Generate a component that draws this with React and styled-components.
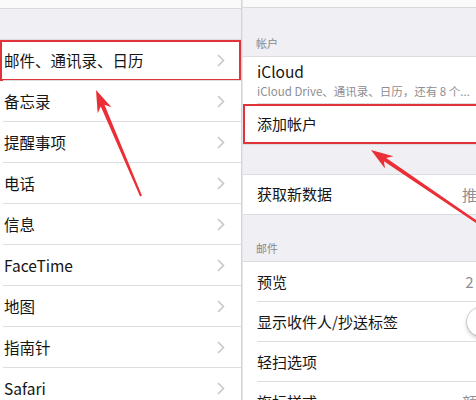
import React from 'react';
import styled, { createGlobalStyle } from 'styled-components';

const GlobalStyle = createGlobalStyle`
  html, body {
    margin: 0;
    padding: 0;
    background: #efeff4;
  }
  body {
    font-family: "Noto Sans CJK SC", "Noto Sans", "Liberation Sans", sans-serif;
    color: #111;
  }
`;

const leftItems = [
  { label: '邮件、通讯录、日历', highlighted: true },
  { label: '备忘录' },
  { label: '提醒事项' },
  { label: '电话' },
  { label: '信息' },
  { label: 'FaceTime' },
  { label: '地图' },
  { label: '指南针' },
  { label: 'Safari' },
];

const mailItems = [
  { label: '预览', value: '2 行' },
  { label: '显示收件人/抄送标签', toggle: true },
  { label: '轻扫选项', value: '' },
  { label: '旗标样式', value: '颜色' },
];

// arrow polygon from the tip back to the tail, tapering shaft
const arrowPoints = (tip, tail) => {
  const dx = tail[0] - tip[0];
  const dy = tail[1] - tip[1];
  const len = Math.hypot(dx, dy);
  const ux = dx / len;
  const uy = dy / len;
  const px = -uy;
  const py = ux;
  const headLen = 22;
  const headW = 7.5;
  const notch = 17;
  const shaftW = 2;
  const tailW = 1;
  const at = (d, w) => [tip[0] + ux * d + px * w, tip[1] + uy * d + py * w];
  return [
    tip,
    at(headLen, headW),
    at(notch, shaftW),
    at(len, tailW),
    at(len, -tailW),
    at(notch, -shaftW),
    at(headLen, -headW),
  ]
    .map(p => p.join(','))
    .join(' ');
};

const Chevron = () => (
  <ChevronIcon viewBox="0 0 8 13" width="8" height="13">
    <polyline points="1,1 6.5,6.5 1,12" fill="none" stroke="#c7c7cc" strokeWidth="1.6" />
  </ChevronIcon>
);

const App = () => (
  <Page>
    <GlobalStyle />
    <LeftPanel>
      <TopStrip $height={9} />
      <Gap $height={30} />
      <Group>
        {leftItems.map(item => (
          <Row key={item.label} $inset={3} $highlighted={item.highlighted}>
            <RowInner $pad={1} $height={40}>
              <Label $size={15.5}>{item.label}</Label>
              <Chevron />
            </RowInner>
          </Row>
        ))}
      </Group>
    </LeftPanel>

    <RightPanel>
      <RightInner>
        <TopStrip $height={8} />
        <SectionHeader $height={48}>帐户</SectionHeader>
        <Group>
          <Row $inset={14}>
            <RowInner $height={46}>
              <Stack>
                <Label $size={15.5}>iCloud</Label>
                <SubLabel>iCloud Drive、通讯录、日历，还有 8 个...</SubLabel>
              </Stack>
              <Chevron />
            </RowInner>
          </Row>
          <Row $inset={2} $highlighted>
            <RowInner $pad={12} $height={39} $last>
              <Label>添加帐户</Label>
              <Chevron />
            </RowInner>
          </Row>
        </Group>

        <Gap $height={29} />
        <Group>
          <Row $inset={14}>
            <RowInner $height={38} $last>
              <Label>获取新数据</Label>
              <Value>推送</Value>
              <Chevron />
            </RowInner>
          </Row>
        </Group>

        <SectionHeader $height={46}>邮件</SectionHeader>
        <Group>
          {mailItems.map(item => (
            <Row key={item.label} $inset={14}>
              <RowInner $height={39}>
                <Label>{item.label}</Label>
                {item.toggle ? (
                  <Toggle>
                    <Knob />
                  </Toggle>
                ) : (
                  <>
                    <Value>{item.value}</Value>
                    <Chevron />
                  </>
                )}
              </RowInner>
            </Row>
          ))}
        </Group>
      </RightInner>
    </RightPanel>

    <Marks viewBox="0 0 476 400" width="476" height="400">
      <polygon points={arrowPoints([96, 90], [141, 196])} fill="#ea2f36" />
      <polygon points={arrowPoints([371, 150], [512, 246])} fill="#ea2f36" />
    </Marks>
  </Page>
);

const Page = styled.div`
  position: relative;
  display: flex;
  width: 476px;
  height: 400px;
  overflow: hidden;
  background: #efeff4;
`;

const LeftPanel = styled.div`
  width: 241px;
  flex: none;
  border-right: 1px solid #d4d4d8;
  display: flex;
  flex-direction: column;
`;

const RightPanel = styled.div`
  flex: 1;
  overflow: hidden;
  border-left: 1px solid #e6e6ea;
`;

const RightInner = styled.div`
  width: 281px;
  display: flex;
  flex-direction: column;
`;

const TopStrip = styled.div`
  height: ${props => props.$height - 1}px;
  background: #fafafa;
  border-bottom: 1px solid #d9d9dd;
  flex: none;
`;

const Gap = styled.div`
  height: ${props => props.$height}px;
  flex: none;
`;

const SectionHeader = styled.div`
  height: ${props => props.$height}px;
  box-sizing: border-box;
  display: flex;
  align-items: flex-end;
  padding: 0 0 5px 13px;
  font-size: 11px;
  color: #8a8a8f;
  flex: none;
`;

const Group = styled.div`
  background: #fff;
  border-top: 1px solid #dcdce0;
  border-bottom: 1px solid #dcdce0;
  display: flex;
  flex-direction: column;
`;

const Row = styled.div`
  padding-left: ${props => props.$inset}px;
  box-shadow: ${props => (props.$highlighted ? 'inset 0 0 0 2px #e2333b' : 'none')};
`;

const RowInner = styled.div`
  height: ${props => props.$height}px;
  display: flex;
  align-items: center;
  gap: 8px;
  padding: 0 16px 0 ${props => props.$pad || 0}px;
  border-bottom: 1px solid ${props => (props.$last ? 'transparent' : '#dedee2')};
  ${Row}:last-child & {
    border-bottom-color: transparent;
  }
`;

const Stack = styled.div`
  flex: 1;
  display: flex;
  flex-direction: column;
  gap: 1px;
  min-width: 0;
`;

const Label = styled.span`
  flex: 1;
  font-size: ${props => props.$size || 15}px;
  color: #151515;
  white-space: nowrap;
  line-height: 1.3;
`;

const SubLabel = styled.span`
  font-size: 11.5px;
  color: #8e8e93;
  white-space: nowrap;
`;

const Value = styled.span`
  font-size: 15px;
  color: #8e8e93;
  white-space: nowrap;
`;

const ChevronIcon = styled.svg`
  flex: none;
  display: block;
`;

const Toggle = styled.span`
  width: 51px;
  height: 31px;
  box-sizing: border-box;
  border-radius: 16px;
  border: 1.5px solid #e3e3e8;
  background: #fff;
  display: flex;
  align-items: center;
  flex: none;
  margin-right: -9px;
`;

const Knob = styled.span`
  width: 28px;
  height: 28px;
  border-radius: 50%;
  background: #fff;
  box-shadow: 0 2px 4px rgba(0, 0, 0, 0.25), 0 0 0 0.5px rgba(0, 0, 0, 0.1);
`;

const Marks = styled.svg`
  position: absolute;
  left: 0;
  top: 0;
  pointer-events: none;
`;

export default App;
